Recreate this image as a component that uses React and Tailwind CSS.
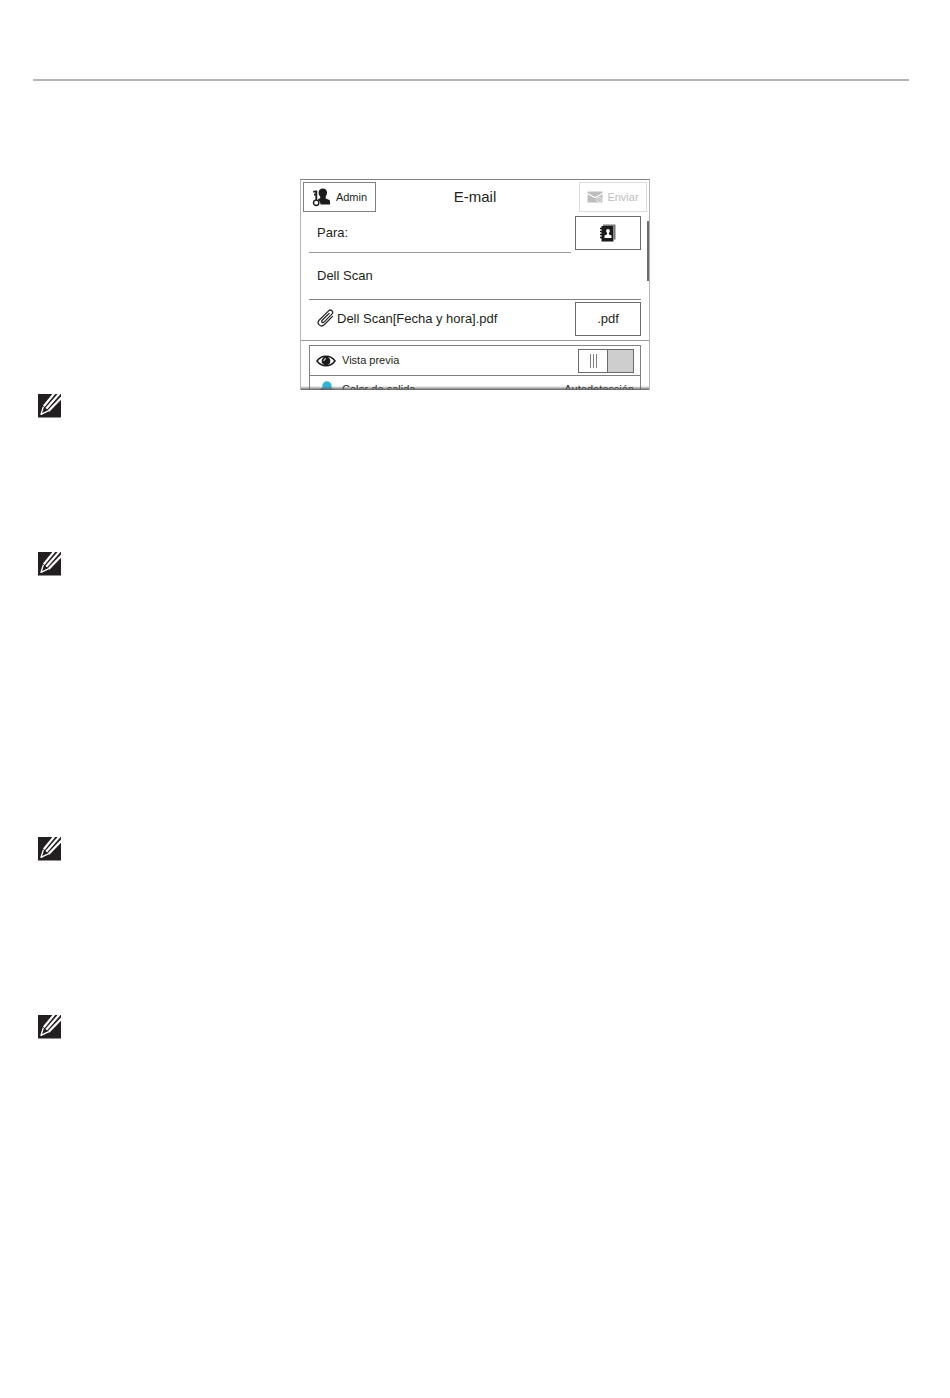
import { useState } from 'react'

function NoteIcon() {
  return (
    <svg viewBox="0 0 23 24" className="block h-6 w-[23px]" role="img" aria-label="Nota">
      <path d="M0 0H23V23.500H0z" fill="#231f20" />
      <path d="M17 -1.500L5.800 12.300M21.500 -.500L8.200 14.800M24.500 2.500L10.600 17" stroke="#fff" strokeWidth="2.200" fill="none" />
      <path d="M5.400 12.800L3 20.300l7.800-3.600" stroke="#fff" strokeWidth="1.300" strokeLinejoin="round" fill="#231f20" />
      <path d="M2.700 20.700l.8-2.600 1.900 1.600z" fill="#fff" />
    </svg>
  )
}

function AdminIcon() {
  return (
    <svg viewBox="0 0 18 19" className="h-[19px] w-[18px]" aria-hidden="true">
      <path d="M10.800 .500C13.600.500 15.200 2.300 15 5c-.1 1.600-.7 2.600-1.300 3.400v2l3.200 1.400c.9.400 1.100 1 1.100 2v2.800H8.400c.3-2.200-.7-3.700-2.200-4.400V11l2-.8V8.400C7.200 7.600 6.600 6.600 6.600 4.800 6.600 2.400 8.200.500 10.800.500z" fill="#1c1a1b" />
      <path d="M4.300 12V2.500M4.300 3.600H1.200M4.300 6.600H2" stroke="#1c1a1b" strokeWidth="1.800" fill="none" />
      <circle cx="4.200" cy="14.800" r="2.700" fill="#fff" stroke="#1c1a1b" strokeWidth="1.400" />
    </svg>
  )
}

function SendIcon() {
  return (
    <svg viewBox="0 0 16 12" className="h-3 w-4" aria-hidden="true">
      <path d="M.500 .500h15v1.500L8 6 .500 2z" fill="#bdbdbd" />
      <path d="M.500 3.200L8 7.200l7.500-4v8.300H.500z" fill="#bdbdbd" />
      <circle cx="12" cy="8.500" r="2.300" fill="none" stroke="#e6e6e6" strokeWidth="1" />
      <path d="M11 9.500l2-2" stroke="#e6e6e6" strokeWidth="1" fill="none" />
    </svg>
  )
}

function AddressBookIcon() {
  return (
    <svg viewBox="0 0 16 18" className="h-[18px] w-4" aria-hidden="true">
      <path d="M3 .500h12.500v15H14V2H3z" fill="#777" />
      <path d="M1.500 2h12v15.500h-12z" fill="#1c1a1b" />
      <path d="M0 4.500h3M0 7.500h3M0 10.500h3M0 13.500h3" stroke="#1c1a1b" strokeWidth="1.300" />
      <circle cx="8" cy="7" r="1.900" fill="#fff" />
      <path d="M7 8h2v2.500l2.500 1V14h-7v-2.500l2.500-1z" fill="#fff" />
    </svg>
  )
}

function ClipIcon() {
  return (
    <svg viewBox="0 0 18 20" className="h-5 w-[18px] shrink-0" fill="none" stroke="#2a2a2a" strokeWidth="1.300" strokeLinecap="round" aria-hidden="true">
      <path d="M12 4.500L5.200 11.300c-1.300 1.400.4 3.100 1.800 1.800l7.900-8c2.200-2.300-1-5.500-3.300-3.200L2.300 11c-3.200 3.400 1.500 8 4.900 4.700l8.300-8.300" />
    </svg>
  )
}

function EyeIcon() {
  return (
    <svg viewBox="0 0 20 12" className="h-3 w-5" aria-hidden="true">
      <path d="M1 6C5.500-.3 14.500-.3 19 6 14.500 12.300 5.500 12.300 1 6z" fill="#fff" stroke="#1c1a1b" strokeWidth="1.500" />
      <circle cx="10" cy="6" r="4.400" fill="#1c1a1b" />
      <path d="M7.800 6A2.400 2.400 0 0 1 10 3.600" stroke="#fff" strokeWidth="1" fill="none" />
    </svg>
  )
}

function ColorIcon() {
  return (
    <svg viewBox="0 0 20 18" className="h-[18px] w-5" aria-hidden="true">
      <circle cx="8" cy="12" r="4.500" fill="#6b3fa0" />
      <circle cx="14" cy="12" r="4.500" fill="#7ab648" />
      <circle cx="11" cy="6" r="4.700" fill="#33b5d8" />
    </svg>
  )
}

function Toggle({ id, checked, onChange }) {
  return (
    <span className="relative flex h-6 w-14 border border-[#6b6b6b]">
      <input id={id} type="checkbox" checked={checked} onChange={e => onChange(e.target.checked)}
        className="absolute inset-0 m-0 h-full w-full cursor-pointer opacity-0" />
      <span className={`flex flex-1 items-center justify-center gap-[2px] bg-white ${checked ? 'order-2' : ''}`}>
        <span className="h-3.5 w-px bg-[#808080]" />
        <span className="h-3.5 w-px bg-[#808080]" />
        <span className="h-3.5 w-px bg-[#808080]" />
      </span>
      <span className="w-[26px] border-l border-[#6b6b6b] bg-[#cecece]" />
    </span>
  )
}

function EmailScreen() {
  const [para, setPara] = useState('')
  const [asunto, setAsunto] = useState('Dell Scan')
  const [vistaPrevia, setVistaPrevia] = useState(false)

  return (
    <section className="relative mx-auto h-[211px] w-full max-w-[350px] overflow-hidden border-x border-t border-x-[#b5b5b5] border-t-[#808080] bg-white">
      {/* Barra superior */}
      <header className="grid grid-cols-[1fr_auto_1fr] items-center px-0.5 pt-0.5">
        <button type="button" className="flex h-[30px] w-[73px] items-center justify-center gap-1.5 border border-[#808080] text-[11px]">
          <AdminIcon />
          Admin
        </button>
        <h1 className="text-[15px]">E-mail</h1>
        <button type="button" disabled className="flex h-[30px] w-[68px] items-center justify-center gap-1 justify-self-end border border-[#dcdcdc] text-[11px] text-[#bdbdbd]">
          <SendIcon />
          Enviar
        </button>
      </header>

      {/* Campos del mensaje */}
      <div className="px-2 pt-1 text-[13px]">
        <div className="flex gap-1">
          <div className="flex h-[37px] flex-1 items-center border-b border-[#9b9b9b] pb-0.5 pl-2">
            <label htmlFor="para">Para:</label>
            <input id="para" value={para} onChange={e => setPara(e.target.value)} className="ml-1 min-w-0 flex-1 outline-none" />
          </div>
          <button type="button" aria-label="Libreta de direcciones" className="flex h-[34px] w-[66px] items-center justify-center border border-[#6b6b6b]">
            <AddressBookIcon />
          </button>
        </div>
        <div className="flex h-[47px] items-center border-b border-[#808080] pl-2">
          <input aria-label="Asunto" value={asunto} onChange={e => setAsunto(e.target.value)} className="w-full outline-none" />
        </div>
        <div className="flex h-10 items-start justify-between pt-0.5">
          <div className="flex h-[34px] items-center gap-0.5 pl-2">
            <ClipIcon />
            <span>Dell Scan[Fecha y hora].pdf</span>
          </div>
          <button type="button" className="h-[34px] w-[66px] border border-[#6b6b6b]">.pdf</button>
        </div>
      </div>

      {/* Opciones de digitalización */}
      <div className="border-t border-[#9b9b9b] px-2 pt-1 text-[11px]">
        <div className="border border-[#808080]">
          <div className="flex h-[30px] items-center justify-between border-b border-[#808080] px-1.5">
            <label htmlFor="vista-previa" className="flex items-center gap-1.5">
              <EyeIcon />
              Vista previa
            </label>
            <Toggle id="vista-previa" checked={vistaPrevia} onChange={setVistaPrevia} />
          </div>
          <div className="flex h-[26px] items-center justify-between px-1.5">
            <span className="flex items-center gap-1.5">
              <ColorIcon />
              Color de salida
            </span>
            <span>Autodetección</span>
          </div>
        </div>
      </div>

      <div className="pointer-events-none absolute inset-x-0 bottom-0 h-1 bg-linear-to-b from-transparent to-[#606060]" />
      <div className="absolute top-[41px] right-0 h-[60px] w-0.5 bg-[#6b6b6b]" />
    </section>
  )
}

export default function App() {
  return (
    <div className="bg-white px-[33px] font-['Liberation_Sans',Arial,sans-serif] text-[#231f20]">
      <div className="mr-2 border-b-2 border-[#b5b5b5] pt-[79px]" />
      <main className="pt-[98px]">
        <EmailScreen />
        <div className="pt-1 pl-[5px]">
          <NoteIcon />
          <div className="mt-[134px]"><NoteIcon /></div>
          <div className="mt-[261px]"><NoteIcon /></div>
          <div className="mt-[154px]"><NoteIcon /></div>
        </div>
      </main>
    </div>
  )
}
